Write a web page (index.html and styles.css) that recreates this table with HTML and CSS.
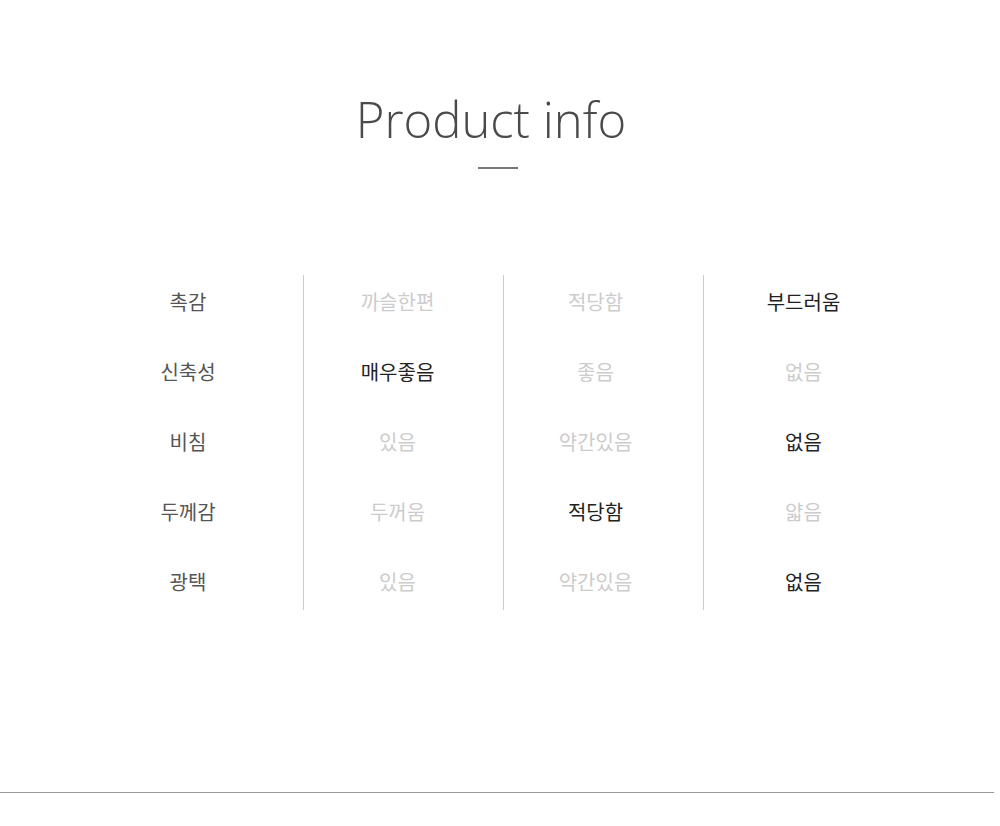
FILE: index.html
```html
<!DOCTYPE html>
<html lang="ko">
<head>
  <meta charset="UTF-8" />
  <title>Product info</title>
  <link rel="stylesheet" href="styles.css">
</head>
<body>

<div class="page">
  <h2 class="title">Product info</h2>
  <div class="title-bar"></div>

  <div class="info-table">
    <div class="col labels">
      <div class="cell">촉감</div>
      <div class="cell">신축성</div>
      <div class="cell">비침</div>
      <div class="cell">두께감</div>
      <div class="cell">광택</div>
    </div>
    <div class="col c2">
      <div class="cell">까슬한편</div>
      <div class="cell on">매우좋음</div>
      <div class="cell">있음</div>
      <div class="cell">두꺼움</div>
      <div class="cell">있음</div>
    </div>
    <div class="col c3">
      <div class="cell">적당함</div>
      <div class="cell">좋음</div>
      <div class="cell">약간있음</div>
      <div class="cell on">적당함</div>
      <div class="cell">약간있음</div>
    </div>
    <div class="col c4">
      <div class="cell on">부드러움</div>
      <div class="cell">없음</div>
      <div class="cell on">없음</div>
      <div class="cell">얇음</div>
      <div class="cell on">없음</div>
    </div>
  </div>
</div>

<div class="footer-line"></div>

</body>
</html>
```

FILE: styles.css
```css
body {
  margin: 0;
  background: #fff;
  font-family: "Noto Sans CJK KR", "Noto Sans", sans-serif;
}

.page {
  padding-top: 85px;
  height: 707px;
}

.title {
  margin: 0;
  text-align: center;
  font-family: "Open Sans", sans-serif;
  font-weight: 300;
  font-size: 49px;
  line-height: 68px;
  color: #4a4a4a;
  padding-right: 18px;
}

.title-bar {
  width: 40px;
  height: 2px;
  background: #777;
  margin: 14px auto 0 478px;
}

.info-table {
  display: grid;
  grid-template-columns: 215px 200px 200px 200px;
  margin: 106px 0 0 88px;
}

.col {
  display: flex;
  flex-direction: column;
  gap: 18px;
  padding-bottom: 3px;
  border-left: 1px solid #ccc;
}

.col.labels {
  border-left: 0;
  padding-right: 15px;
}

.col.c2 {
  padding-right: 12px;
}

.col.c3 {
  padding-right: 16px;
}

.cell {
  height: 50px;
  padding-top: 2px;
  line-height: 50px;
  text-align: center;
  font-size: 20px;
  font-weight: 400;
  color: #ccc;
}

.labels .cell {
  color: #555;
}

.cell.on {
  color: #222;
}

.footer-line {
  width: 994px;
  height: 1px;
  background: #999;
}
```
